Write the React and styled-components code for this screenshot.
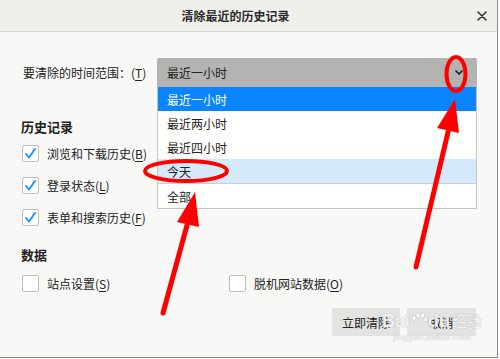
import React from "react";
import styled, { createGlobalStyle } from "styled-components";

const GlobalStyle = createGlobalStyle`
  html, body {
    margin: 0;
    padding: 0;
    background: #ffffff;
  }
  body {
    font-family: "Noto Sans CJK SC", "Noto Sans", sans-serif;
    color: #222;
  }
`;

const Page = styled.div`
  position: relative;
  width: 500px;
  height: 359px;
  overflow: hidden;
  background: #ffffff;
`;

const Dialog = styled.div`
  position: relative;
  width: 497px;
  height: 357px;
  display: flex;
  flex-direction: column;
  background: #f8f8f6;
  border-right: 1px solid #8a8a88;
  border-bottom: 1px solid #8a8a88;
`;

const TitleBar = styled.div`
  height: 31px;
  flex: none;
  display: grid;
  grid-template-columns: 1fr 30px;
  align-items: center;
  background: #efefec;
  border-bottom: 1px solid #d9d9d6;
`;

const Title = styled.div`
  text-align: center;
  padding-left: 4px;
  font-size: 12px;
  font-weight: 600;
  color: #2b2b2b;
`;

const Close = styled.div`
  display: flex;
  align-items: center;
  justify-content: center;
`;

const Body = styled.div`
  flex: 1;
  display: flex;
  flex-direction: column;
  padding: 26px 21px 0 21px;
`;

const RangeRow = styled.div`
  display: grid;
  grid-template-columns: 134px 320px;
  align-items: center;
  margin-left: 2px;
`;

const Label = styled.span`
  font-size: 12px;
  white-space: nowrap;
`;

const Key = styled.span`
  text-decoration: underline;
  text-underline-offset: 2px;
`;

const SelectWrap = styled.div`
  position: relative;
`;

const Select = styled.div`
  height: 29px;
  box-sizing: border-box;
  display: flex;
  align-items: center;
  justify-content: space-between;
  padding: 0 14px 0 10px;
  background: #b3b3b1;
  border-radius: 2px 2px 0 0;
  font-size: 12px;
  color: #222;
`;

const Menu = styled.div`
  position: absolute;
  top: 29px;
  left: 0;
  width: 320px;
  box-sizing: border-box;
  background: #fffffd;
  border: 1px solid #c4c4c2;
  border-top: none;
  display: flex;
  flex-direction: column;
  z-index: 2;
`;

const Option = styled.div`
  height: 24px;
  display: flex;
  align-items: center;
  padding-left: 9px;
  font-size: 12px;
  color: ${p => (p.$active ? "#ffffff" : "#222")};
  background: ${p => (p.$active ? "#0a84ff" : p.$hover ? "#d5e9fb" : "transparent")};
  border-bottom: ${p => (p.$hover ? "1px solid #c7ced4" : "none")};
`;

const Heading = styled.div`
  height: 20px;
  line-height: 20px;
  font-size: 13px;
  font-weight: 700;
  color: #222;
  margin-top: ${p => p.$top}px;
  margin-bottom: ${p => p.$bottom || 0}px;
`;

const CheckRow = styled.div`
  height: 32px;
  display: flex;
  align-items: center;
`;

const DataRow = styled.div`
  display: grid;
  grid-template-columns: 207px auto;
  height: 32px;
  align-items: center;
`;

const Item = styled.label`
  display: flex;
  align-items: center;
  gap: 8px;
  font-size: 12px;
  color: #222;
  white-space: nowrap;
`;

const Box = styled.span`
  width: 17px;
  height: 17px;
  box-sizing: border-box;
  margin-left: 1px;
  border: 1px solid #bdbdbb;
  border-radius: 2px;
  background: #ffffff;
  display: flex;
  align-items: center;
  justify-content: center;
`;

const Buttons = styled.div`
  display: flex;
  justify-content: flex-end;
  gap: 7px;
  margin-top: 9px;
`;

const Button = styled.div`
  width: ${p => p.$w}px;
  height: 28px;
  display: flex;
  align-items: center;
  justify-content: center;
  background: #e3e3e1;
  border-radius: 2px;
  font-size: 12px;
  color: #222;
`;

const Watermark = styled.div`
  position: absolute;
  left: 382px;
  top: 311px;
  display: flex;
  flex-direction: column;
  align-items: center;
  color: rgba(255, 255, 255, 0.9);
  text-shadow: 0 0 1px rgba(90, 90, 90, 0.55);
  font-family: "Liberation Sans", Arial, sans-serif;
  pointer-events: none;
  z-index: 3;
`;

const MarkLine = styled.div`
  display: flex;
  align-items: center;
  font-size: 18px;
  font-weight: 700;
  line-height: 20px;
`;

const MarkCn = styled.span`
  font-family: "Noto Sans CJK SC", sans-serif;
  font-size: 15px;
  font-weight: 400;
  margin-left: 2px;
`;

const MarkUrl = styled.div`
  font-size: 9px;
  letter-spacing: 0.3px;
  line-height: 12px;
`;

const Annotations = styled.svg`
  position: absolute;
  left: 0;
  top: 0;
  pointer-events: none;
  z-index: 5;
`;

const Check = () => (
  <svg width="13" height="13" viewBox="0 0 13 13">
    <path d="M2 7 L5 10.5 L11 2" fill="none" stroke="#1a8cff" strokeWidth="1.8" strokeLinecap="round" strokeLinejoin="round" />
  </svg>
);

const CheckBox = ({ checked, children }) => (
  <Item>
    <Box>{checked && <Check />}</Box>
    <span>{children}</span>
  </Item>
);

const options = [
  { text: "最近一小时", active: true },
  { text: "最近两小时" },
  { text: "最近四小时" },
  { text: "今天", hover: true },
  { text: "全部" },
];

export default function App() {
  return (
    <Page>
      <GlobalStyle />
      <Dialog>
        <TitleBar>
          <Title>清除最近的历史记录</Title>
          <Close>
            <svg width="10" height="10" viewBox="0 0 10 10">
              <path d="M1 1 L9 9 M9 1 L1 9" stroke="#333" strokeWidth="1.6" strokeLinecap="round" />
            </svg>
          </Close>
        </TitleBar>
        <Body>
          <RangeRow>
            <Label>要清除的时间范围：(<Key>T</Key>)</Label>
            <SelectWrap>
              <Select>
                <span>最近一小时</span>
                <svg width="8" height="5" viewBox="0 0 8 5">
                  <path d="M1 1 L4 4 L7 1" fill="none" stroke="#222" strokeWidth="1.7" strokeLinecap="round" strokeLinejoin="round" />
                </svg>
              </Select>
              <Menu>
                {options.map(o => (
                  <Option key={o.text} $active={o.active} $hover={o.hover}>
                    {o.text}
                  </Option>
                ))}
              </Menu>
            </SelectWrap>
          </RangeRow>

          <Heading $top={30}>历史记录</Heading>
          <CheckRow>
            <CheckBox checked>浏览和下载历史(<Key>B</Key>)</CheckBox>
          </CheckRow>
          <CheckRow>
            <CheckBox checked>登录状态(<Key>L</Key>)</CheckBox>
          </CheckRow>
          <CheckRow>
            <CheckBox checked>表单和搜索历史(<Key>F</Key>)</CheckBox>
          </CheckRow>

          <Heading $top={12} $bottom={2}>数据</Heading>
          <DataRow>
            <CheckBox>站点设置(<Key>S</Key>)</CheckBox>
            <CheckBox>脱机网站数据(<Key>O</Key>)</CheckBox>
          </DataRow>

          <Buttons>
            <Button $w={68}>立即清除</Button>
            <Button $w={69}>取消</Button>
          </Buttons>
        </Body>

        <Watermark>
          <MarkLine>
            Bai
            <svg width="18" height="18" viewBox="0 0 18 18">
              <g fill="rgba(255,255,255,0.9)" stroke="rgba(120,120,120,0.35)" strokeWidth="0.6">
                <ellipse cx="4" cy="6" rx="2" ry="2.6" />
                <ellipse cx="8" cy="3" rx="2" ry="2.4" />
                <ellipse cx="12.5" cy="3.5" rx="2" ry="2.4" />
                <ellipse cx="15.5" cy="7.5" rx="1.8" ry="2.3" />
              </g>
            </svg>
            du<MarkCn>经验</MarkCn>
          </MarkLine>
          <MarkUrl>jingyan.baidu.com</MarkUrl>
        </Watermark>
      </Dialog>

      <Annotations width="500" height="359" viewBox="0 0 500 359">
        <g fill="none" stroke="#ff0000" strokeWidth="4">
          <ellipse cx="456" cy="74" rx="9.5" ry="17" />
          <ellipse cx="186" cy="171" rx="41" ry="10" />
        </g>
        <g stroke="#ff0000" strokeWidth="5" strokeLinecap="round">
          <line x1="163" y1="313" x2="189" y2="218" />
          <line x1="416" y1="267" x2="449" y2="128" />
        </g>
        <g fill="#ff0000">
          <polygon points="195,192 177,222 199,227" />
          <polygon points="455,99 437,128 459,133" />
        </g>
      </Annotations>
    </Page>
  );
}
